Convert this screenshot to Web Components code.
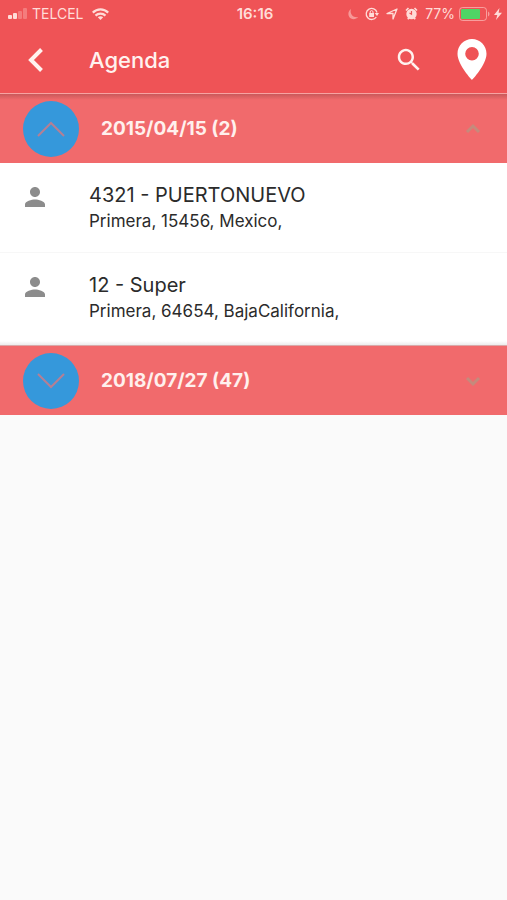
<!DOCTYPE html>

<html lang="es">
	<head>
		<meta charset="utf-8">
		<meta name="viewport" content="width=device-width, initial-scale=1">
		<title>Agenda</title>
		<style>
			body {
				margin: 0;
				min-height: 100vh;
				background-color: #fafafa;
				font-family: Inter, "Liberation Sans", sans-serif;
				color: #2b2b2b;
			}
		</style>
	</head>

	<body>
		<status-bar carrier="TELCEL" time="16:16" battery="77"></status-bar>
		<app-bar>Agenda</app-bar>
		<main>
			<agenda-group label="2015/04/15 (2)" open>
				<agenda-item>
					4321 - PUERTONUEVO
					<span slot="address">Primera, 15456, Mexico,</span>
				</agenda-item>
				<agenda-item>
					12 - Super
					<span slot="address">Primera, 64654, BajaCalifornia,</span>
				</agenda-item>
			</agenda-group>
			<agenda-group label="2018/07/27 (47)"></agenda-group>
		</main>
	</body>

	<script>
		class StatusBar extends HTMLElement {
			constructor() {
				super();

				const shadow = this.attachShadow({ mode: 'open' });
				const battery = parseInt(this.getAttribute('battery'));

				shadow.innerHTML = `
					<style>
						:host {
							display: grid;
							grid-template-columns: 1fr auto 1fr;
							align-items: center;
							height: 27px;
							padding: 0 5px 0 8px;
							background-color: #ef5356;
							color: #ffdcd8;
							font-size: 14px;
							line-height: 16px;
						}
						svg {
							display: block;
							flex: none;
						}
						.left, .right {
							display: flex;
							align-items: center;
							gap: 4px;
						}
						.wifi {
							margin-left: 4px;
						}
						.right {
							justify-content: flex-end;
							gap: 7px;
						}
						.power {
							display: flex;
							align-items: center;
							gap: 4px;
						}
						.time {
							font-size: 15px;
							font-weight: 600;
						}
					</style>
					<div class="left">
						<svg width="20" height="12" viewBox="0 0 20 12" fill="currentColor">
							<rect x="0" y="7" width="4" height="4" rx="1"/>
							<rect x="5" y="5" width="4" height="6" rx="1"/>
							<rect x="10" y="3" width="4" height="8" rx="1" opacity=".3"/>
							<rect x="15" y="0" width="4" height="11" rx="1" opacity=".3"/>
						</svg>
						<span>${this.getAttribute('carrier')}</span>
						<svg class="wifi" width="17" height="12" viewBox="0 0 17 12" fill="none" stroke="currentColor" stroke-width="2.200">
							<path d="M.8 4.600C5.200.2 11.800.2 16.200 4.600"/>
							<path d="M3.500 7.600c2.800-2.700 7.200-2.700 10 0"/>
							<path d="M5.800 9.200l2.700 2.800 2.700-2.800c-1.500-1.300-3.900-1.300-5.400 0z" fill="currentColor" stroke="none"/>
						</svg>
					</div>
					<div class="time">${this.getAttribute('time')}</div>
					<div class="right">
						<svg width="10" height="12" viewBox="0 0 10 12" fill="currentColor" opacity=".5">
							<path d="M3 1C-.5 3.500-.5 8.500 3 10.500c2.500 1.300 5.500.5 7-1.500C5 10 1.500 6 3 1z"/>
						</svg>
						<svg width="14" height="14" viewBox="0 0 14 14" fill="none" stroke="currentColor">
							<path d="M11.300 10A5.500 5.500 0 1 1 12 5.500" stroke-width="1.300"/>
							<path d="M9.700 6h4.300l-2 3z" fill="currentColor" stroke="none"/>
							<rect x="4.200" y="6" width="4.800" height="4" fill="currentColor" stroke="none"/>
							<path d="M5.200 6V5a1.400 1.400 0 0 1 2.800 0v1"/>
						</svg>
						<svg width="12" height="12" viewBox="0 0 12 12" fill="none" stroke="currentColor" stroke-width="1.300" stroke-linejoin="round">
							<path d="M11 1L7 11V5.500H1z"/>
						</svg>
						<svg width="13" height="13" viewBox="0 0 13 13">
							<circle cx="6.500" cy="7" r="5.200" fill="currentColor"/>
							<path d="M1 3.500L3.500 1M12 3.500L9.500 1M2.800 12.300l1-1.300M10.200 12.300l-1-1.300" stroke="currentColor" stroke-width="1.600"/>
							<path d="M6.500 4v3.200L4.500 6" fill="none" stroke="#ef5356" stroke-width="1.200"/>
						</svg>
						<div class="power">
							<span>${battery}%</span>
							<svg width="31" height="14" viewBox="0 0 31 14">
								<rect x=".5" y=".5" width="27" height="13" rx="3" fill="none" stroke="currentColor" opacity=".55"/>
								<rect x="2" y="2" width="${Math.round(battery * 25 / 100)}" height="10" rx="1" fill="#4fd565"/>
								<path d="M29 4.500c2 1 2 4 0 5z" fill="currentColor" opacity=".55"/>
							</svg>
							<svg width="8" height="12" viewBox="0 0 8 12" fill="currentColor">
								<path d="M5.500 0L0 7h3.300L2 12l6-7.300H4.600z"/>
							</svg>
						</div>
					</div>
				`;
			}
		}
		customElements.define('status-bar', StatusBar);

		class AppBar extends HTMLElement {
			constructor() {
				super();

				const shadow = this.attachShadow({ mode: 'open' });

				shadow.innerHTML = `
					<style>
						:host {
							position: relative;
							z-index: 1;
							display: block;
							background-color: #ef5356;
							border-bottom: 1px solid #f7a3a2;
							color: #fff2ef;
						}
						/* shadow falls only below the bar */
						:host::after {
							content: "";
							position: absolute;
							top: 100%;
							left: 0;
							right: 0;
							height: 6px;
							margin-top: 1px;
							background: linear-gradient(rgba(110, 50, 50, 0.3), rgba(110, 50, 50, 0));
							pointer-events: none;
						}
						header {
							display: flex;
							align-items: center;
							height: 66px;
							padding: 0 15px 0 16px;
							box-sizing: border-box;
						}
						h1 {
							flex: 1;
							margin: 0 0 0 33px;
							font-size: 22px;
							font-weight: 500;
							line-height: 28px;
						}
						button {
							display: flex;
							justify-content: center;
							align-items: center;
							width: 40px;
							height: 48px;
							margin: 0;
							padding: 0;
							border: 0;
							background: none;
							color: inherit;
							cursor: pointer;
						}
						.map {
							margin-left: 23px;
						}
						svg {
							display: block;
							flex: none;
						}
					</style>
					<header>
						<button type="button" aria-label="Regresar">
							<svg width="18" height="26" viewBox="0 0 18 26" fill="none" stroke="currentColor" stroke-width="4">
								<path d="M14.500 2.500L4 13l10.500 10.500"/>
							</svg>
						</button>
						<h1><slot></slot></h1>
						<button type="button" aria-label="Buscar">
							<svg width="30" height="30" viewBox="0 0 24 24" fill="currentColor">
								<path d="M15.500 14h-.79l-.28-.27C15.410 12.590 16 11.110 16 9.500 16 5.910 13.090 3 9.500 3S3 5.910 3 9.500 5.910 16 9.500 16c1.610 0 3.090-.59 4.230-1.570l.27.28v.79l5 4.990L20.490 19l-4.990-5zm-6 0C7.010 14 5 11.990 5 9.500S7.010 5 9.500 5 14 7.010 14 9.500 11.990 14 9.500 14z"/>
							</svg>
						</button>
						<button type="button" class="map" aria-label="Mapa">
							<svg width="30" height="42" viewBox="0 0 30 42">
								<path d="M15 0C7 0 .5 6.600.5 14.800.5 26 15 41 15 41s14.500-15 14.500-26.200C29.500 6.600 23 0 15 0zm0 21.500a6.800 6.800 0 1 1 0-13.600 6.800 6.800 0 0 1 0 13.600z" fill="#fff"/>
							</svg>
						</button>
					</header>
				`;
			}
		}
		customElements.define('app-bar', AppBar);

		class AgendaGroup extends HTMLElement {
			constructor() {
				super();

				const shadow = this.attachShadow({ mode: 'open' });

				shadow.innerHTML = `
					<style>
						:host {
							display: block;
						}
						h2 {
							margin: 0;
							font: inherit;
						}
						button {
							display: flex;
							align-items: center;
							width: 100%;
							height: 69px;
							margin: 0;
							padding: 0 24px 0 23px;
							border: 0;
							background-color: #f16a6c;
							color: #fff0ed;
							font: 700 19px/24px Inter, "Liberation Sans", sans-serif;
							text-align: left;
							cursor: pointer;
						}
						.circle {
							display: flex;
							justify-content: center;
							align-items: center;
							width: 56px;
							height: 56px;
							margin-right: 22px;
							border-radius: 50%;
							background-color: #3598db;
							color: #b57f94;
						}
						.label {
							flex: 1;
						}
						.arrow {
							color: #c58a7c;
						}
						svg {
							display: block;
							flex: none;
						}
						:host([open]) svg {
							transform: scaleY(-1);
						}
						.items {
							display: none;
							padding-bottom: 3px;
							background: linear-gradient(#fff, #fff calc(100% - 4px), #ececec);
							border-bottom: 1px solid #d9a9a9;
						}
						:host([open]) .items {
							display: block;
						}
					</style>
					<h2>
						<button type="button">
							<span class="circle">
								<svg width="28" height="16" viewBox="0 0 28 16" fill="none" stroke="currentColor" stroke-width="2">
									<path d="M1 1l13 13L27 1"/>
								</svg>
							</span>
							<span class="label"></span>
							<svg class="arrow" width="20" height="12" viewBox="0 0 20 12" fill="none" stroke="currentColor" stroke-width="3">
								<path d="M4 3l6 6 6-6"/>
							</svg>
						</button>
					</h2>
					<div class="items"><slot></slot></div>
				`;

				this.button = shadow.querySelector('button');
				shadow.querySelector('.label').textContent = this.getAttribute('label');

				this.button.addEventListener('click', () => {
					this.toggleAttribute('open');
				});
			}

			static get observedAttributes() {
				return ['open'];
			}

			connectedCallback() {
				this.setExpanded();
			}

			attributeChangedCallback() {
				this.setExpanded();
			}

			setExpanded() {
				this.button.setAttribute('aria-expanded', this.hasAttribute('open'));
			}
		}
		customElements.define('agenda-group', AgendaGroup);

		class AgendaItem extends HTMLElement {
			constructor() {
				super();

				const shadow = this.attachShadow({ mode: 'open' });

				shadow.innerHTML = `
					<style>
						:host {
							display: flex;
							align-items: flex-start;
							gap: 39px;
							padding: 19px 20px 18px;
							border-bottom: 1px solid #f7f7f7;
						}
						:host(:last-child) {
							border-bottom: 0;
						}
						svg {
							display: block;
							flex: none;
							color: #8c8c8c;
						}
						.name, .address {
							display: block;
							line-height: 26px;
						}
						.name {
							font-size: 20px;
						}
						.address {
							font-size: 17px;
						}
					</style>
					<svg width="30" height="30" viewBox="0 0 24 24" fill="currentColor">
						<path d="M12 12c2.210 0 4-1.790 4-4s-1.790-4-4-4-4 1.790-4 4 1.790 4 4 4zm0 2c-2.670 0-8 1.340-8 4v2h16v-2c0-2.660-5.330-4-8-4z"/>
					</svg>
					<div>
						<span class="name"><slot></slot></span>
						<span class="address"><slot name="address"></slot></span>
					</div>
				`;
			}
		}
		customElements.define('agenda-item', AgendaItem);
	</script>
</html>
